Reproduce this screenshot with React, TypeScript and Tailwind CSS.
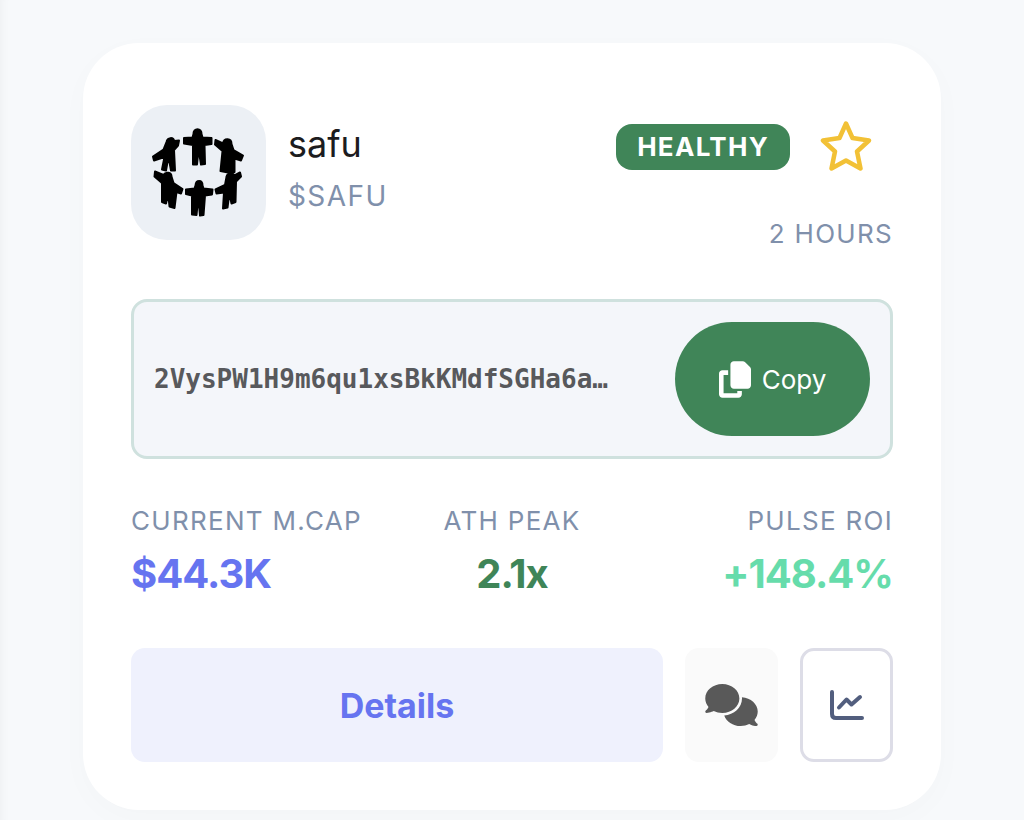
import { FaComments, FaCopy } from "react-icons/fa6";

type Stat = {
  label: string;
  value: string;
  className: string;
  valueClassName: string;
};

const token = {
  name: "safu",
  symbol: "$SAFU",
  status: "HEALTHY",
  age: "2 HOURS",
  address: "2VysPW1H9m6qu1xsBkKMdfSGHa6a…",
};

const stats: Stat[] = [
  { label: "CURRENT M.CAP", value: "$44.3K", className: "text-left", valueClassName: "text-[#6674f0]" },
  { label: "ATH PEAK", value: "2.1x", className: "text-center", valueClassName: "text-[#3f8558]" },
  { label: "PULSE ROI", value: "+148.4%", className: "text-right", valueClassName: "text-[#66dcab]" },
];

// six people standing in a circle
const TokenLogo = () => (
  <svg viewBox="11 10 135 135" className="size-full" fill="#000" stroke="#000" strokeWidth="2" strokeLinejoin="round" aria-hidden="true">
    <path d="M73.500 39C73 32.500 82 32.500 81.500 39L82.500 42.500 91.500 43V49L84.500 50 85 69 81 69.500 79.500 60 78 60 77 69.500 73 69.500 73 50 64 48.500V43L72.500 42.500Z" />
    <path d="M46.500 47C47.500 42 53.500 42 54 46L59 45.500 58 50.500 54 55 55 75.500 51 75.500 49.500 67 47.500 67 46 75.500 42 74.500 44.500 62 34 65.500 33 61.500 43.500 54.500Z" />
    <path d="M103 48.500C104 42.500 111.500 43 111.500 49L113.500 55 123 60.500 121 65.500 114.500 63.500 114.500 77 108 77.500 100.500 76 102.500 56 95 49.500 95.500 45Z" />
    <path d="M35 76.500L43.500 80C45.500 76.500 51.500 77 51.500 81.500L53.500 88 62.500 94 61 98.500 56.500 97 54.500 113 49.500 111.500 48.500 102 47.500 102 46 108.500 42 107 42 88 34.500 81.500Z" />
    <path d="M75.500 90.500C76 84.500 82.500 84.500 82.500 90.500L83.500 93.500 92.500 94.500 92 99.500 85 100.500 83.500 120 80 120.500 79 110 77.500 110 76.500 120 72 119.500 72 100.500 66 99V94.500L74.500 93.500Z" />
    <path d="M106.500 82C107 77.500 113.500 77.500 114.500 80.500L120 77.500 121 81.500 116 86.500 115.500 107 111.500 108.500 110 101 109 101 107.500 112.500 103 113.500 104 97.500 96.500 98.500 95.500 94.500 105 90Z" />
  </svg>
);

const StarIcon = () => (
  <svg viewBox="0 0 52 52" className="size-13" fill="none" stroke="#f2c136" strokeWidth="4.5" strokeLinejoin="round" aria-hidden="true">
    <path d="M26 2.500L32.500 17 49 19.500 37 30.500 40.500 47.500 26 39.500 11.500 47.500 15 30.500 3 19.500 19.500 17Z" />
  </svg>
);

const ChartIcon = () => (
  <svg viewBox="0 0 34 30" className="h-[30px] w-[34px]" fill="none" stroke="#525e7e" strokeWidth="4" strokeLinecap="round" strokeLinejoin="round" aria-hidden="true">
    <path d="M2 2V24Q2 28 6 28H32" />
    <path d="M9 17.500L16.500 9.500 21.500 14.500 30 7" />
  </svg>
);

export default function App() {
  return (
    <main className="min-h-screen bg-[#f7f9fb] px-[83px] pt-[43px] pb-[11px] font-[Inter,sans-serif] shadow-[inset_8px_0_8px_-6px_rgba(0,0,0,0.04)]">
      <article className="rounded-[56px] bg-white px-12 pt-[62px] pb-12 shadow-[0_8px_32px_rgba(0,0,0,0.02)]">
        <header className="flex justify-between">
          <div className="flex gap-[22px]">
            <div className="size-[135px] overflow-hidden rounded-[36px] bg-[#ecf0f5]">
              <TokenLogo />
            </div>
            <div className="pt-4">
              <h1 className="text-[36px] leading-[46px] text-[#1c1c1e]">{token.name}</h1>
              <p className="mt-3 text-[28px] leading-[34px] tracking-wider text-[#8090ab]">{token.symbol}</p>
            </div>
          </div>
          <div className="flex flex-col items-end pt-4">
            <div className="flex items-center gap-[30px] pr-[21px]">
              <span className="rounded-2xl bg-[#408558] px-[21px] py-2 text-[26px] leading-[30px] font-bold tracking-wider text-white">
                {token.status}
              </span>
              <button type="button" aria-label="Add to favorites">
                <StarIcon />
              </button>
            </div>
            <p className="mt-11 text-[26px] leading-[34px] tracking-wider text-[#8090ab]">{token.age}</p>
          </div>
        </header>

        <section className="mt-12 flex items-center justify-between gap-5 rounded-2xl border-3 border-[#cfe1de] bg-[#f4f6fa] p-5">
          <code className="truncate font-['DejaVu_Sans_Mono',monospace] text-[26px] font-bold text-[#58595c]">
            {token.address}
          </code>
          <button type="button" className="flex h-[114px] w-[195px] shrink-0 items-center justify-center gap-[11px] rounded-full bg-[#408558] text-[26px] text-white">
            <FaCopy className="h-[37px] w-8" aria-hidden="true" />
            Copy
          </button>
        </section>

        <dl className="mt-[45px] grid grid-cols-3">
          {stats.map((stat) => (
            <div key={stat.label} className={stat.className}>
              <dt className="text-[26px] leading-[34px] tracking-wider text-[#8090ab]">{stat.label}</dt>
              <dd className={`mt-3 text-[40px] leading-12 font-bold tracking-tight ${stat.valueClassName}`}>{stat.value}</dd>
            </div>
          ))}
        </dl>

        <footer className="mt-[50px] flex h-[114px] gap-[22px]">
          <button type="button" className="flex-1 rounded-[14px] bg-[#eff1fd] text-[34px] font-bold text-[#6674f0]">
            Details
          </button>
          <button type="button" aria-label="Chat" className="flex w-[93px] items-center justify-center rounded-[14px] bg-[#fafafa] text-[#595959]">
            <FaComments className="h-[42px] w-[53px]" aria-hidden="true" />
          </button>
          <button type="button" aria-label="Chart" className="flex w-[93px] items-center justify-center rounded-[14px] border-3 border-[#dddde7] bg-white">
            <ChartIcon />
          </button>
        </footer>
      </article>
    </main>
  );
}
